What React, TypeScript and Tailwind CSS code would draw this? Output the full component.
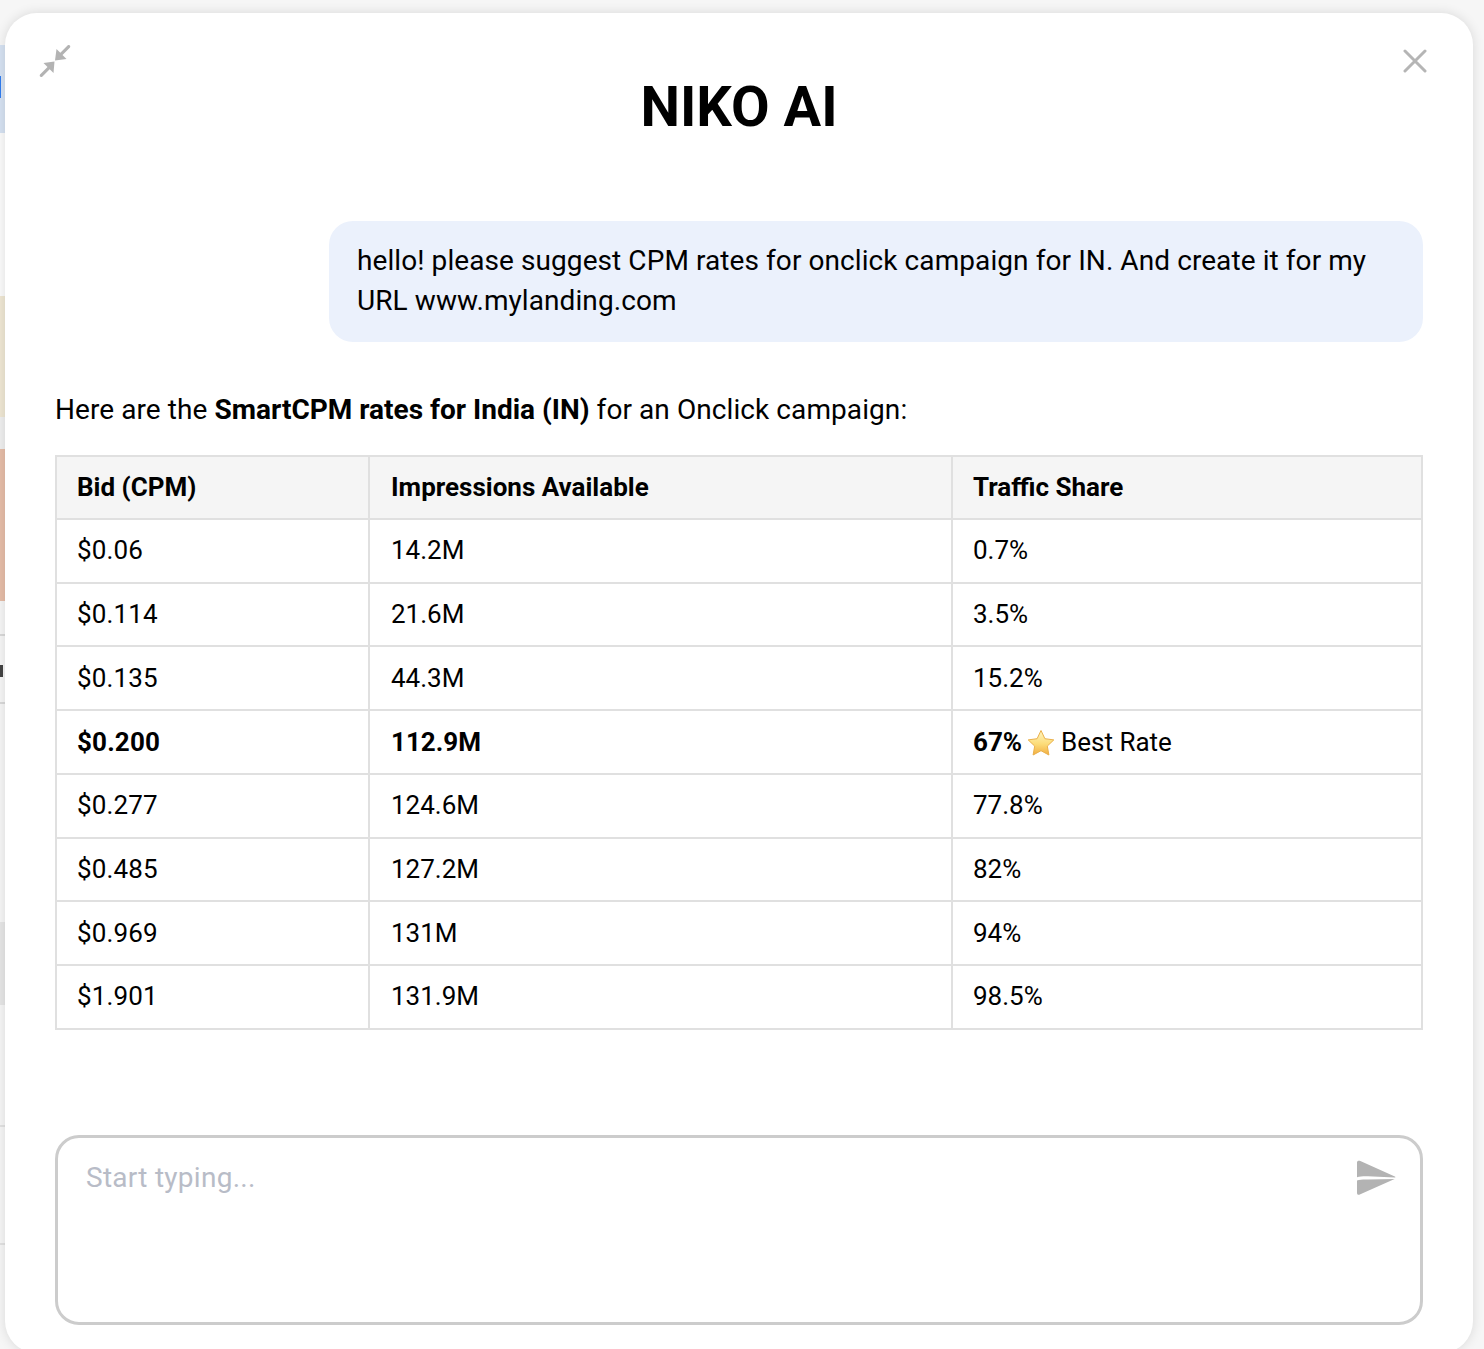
const rows = [
  { bid: "$0.06", imps: "14.2M", share: "0.7%" },
  { bid: "$0.114", imps: "21.6M", share: "3.5%" },
  { bid: "$0.135", imps: "44.3M", share: "15.2%" },
  { bid: "$0.200", imps: "112.9M", share: "67%", best: true },
  { bid: "$0.277", imps: "124.6M", share: "77.8%" },
  { bid: "$0.485", imps: "127.2M", share: "82%" },
  { bid: "$0.969", imps: "131M", share: "94%" },
  { bid: "$1.901", imps: "131.9M", share: "98.5%" },
];

function Star() {
  return (
    <svg viewBox="0 0 28 27" className="inline-block w-[28px] h-[27px] -my-[6px] ml-[5px] mr-[6px] align-[1px]">
      <defs>
        <linearGradient id="star" x1="0" y1="0" x2="0" y2="1">
          <stop offset="0" stopColor="#fff6c4" />
          <stop offset="0.55" stopColor="#fcdc78" />
          <stop offset="1" stopColor="#f2ae42" />
        </linearGradient>
      </defs>
      <path
        d="M14 1.5l3.9 8.2 8.9 1.2-6.5 6.2 1.6 8.9L14 21.7 6.100 26l1.600-8.900-6.500-6.200 8.900-1.200z"
        fill="url(#star)"
        stroke="#eab04a"
        strokeWidth="1"
        strokeLinejoin="round"
      />
    </svg>
  );
}

export default function App() {
  return (
    <div className="flex h-screen overflow-hidden bg-[#f6f6f6] font-['Roboto',sans-serif] text-black">
      {/* what shows of the page behind the modal */}
      <div className="w-[5px] shrink-0 flex flex-col">
        <div className="h-[45px]" />
        <div className="h-[88px] bg-[#d6e2f2] pt-[31px]">
          <div className="h-[22px] w-[1px] bg-[#2f7cf0]" />
        </div>
        <div className="h-[163px] bg-[#fbfbfb]" />
        <div className="h-[121px] bg-[#efe7d3]" />
        <div className="h-[32px] bg-[#efefef]" />
        <div className="h-[152px] bg-[#e6bda8]" />
        <div className="h-[33px]" />
        <div className="h-[70px] border-y-2 border-[#d9d9d9] pt-[29px]">
          <div className="h-[12px] w-[3px] bg-[#444444]" />
        </div>
        <div className="h-[218px]" />
        <div className="h-[83px] bg-[#e6e6e6]" />
        <div className="h-[120px]" />
        <div className="h-[120px] border-y-2 border-[#e2e2e2]" />
      </div>

      <div className="relative mt-[13px] w-[1468px] h-[1340px] shrink-0 rounded-[32px] bg-white shadow-[0_0_12px_rgba(0,0,0,0.12)] px-[50px]">
        <button className="absolute left-[33px] top-[31px] text-[#b3b3b3]">
          <svg viewBox="0 0 34 34" className="w-[34px] h-[34px]" fill="currentColor">
            <path d="M32 3.500 24.500 11l4 4L17 16.500 18.500 5l3.800 3.800L29.800 1.300c1.500-1 3.200.7 2.200 2.200z" />
            <path d="M2 30.500 9.500 23l-4-4L16.500 17.500 15.500 29l-3.800-3.800L4.200 32.700c-1.500 1-3.200-.7-2.200-2.200z" />
          </svg>
        </button>
        <button className="absolute left-[1398px] top-[36px] text-[#b5b5b5]">
          <svg viewBox="0 0 24 24" className="w-[24px] h-[24px]" fill="none" stroke="currentColor" strokeWidth="3" strokeLinecap="round">
            <path d="M2 2l20 20M22 2L2 22" />
          </svg>
        </button>

        <h1 className="pt-[59px] text-center text-[56px] leading-[70px] font-bold">NIKO AI</h1>

        <div className="mt-[79px] ml-[274px] rounded-[24px] bg-[#ebf1fc] pl-[28px] pr-[27px] pt-[20px] pb-[21px] text-[28px] leading-[40px] tracking-[0.08px]">
          hello! please suggest CPM rates for onclick campaign for IN. And create it for my URL www.mylanding.com
        </div>

        <p className="mt-[48px] text-[28px] leading-[40px] tracking-[0.08px]">
          Here are the <strong className="font-bold tracking-[0px]">SmartCPM rates for India (IN)</strong> for an Onclick campaign:
        </p>

        <table className="mt-[25px] w-[1368px] table-fixed border-collapse text-[26px]">
          <thead>
            <tr className="h-[63px] bg-[#f5f5f5] text-left font-bold">
              <th className="w-[313px] border-2 border-[#e0e0e0] pl-[20px]">Bid (CPM)</th>
              <th className="w-[583px] border-2 border-[#e0e0e0] pl-[21px]">Impressions Available</th>
              <th className="border-2 border-[#e0e0e0] pl-[20px]">Traffic Share</th>
            </tr>
          </thead>
          <tbody>
            {rows.map((r) => (
              <tr key={r.bid} className="h-[63.72px]">
                <td className={`border-2 border-[#e0e0e0] pl-[20px] tracking-[0.15px] ${r.best ? "font-bold" : ""}`}>{r.bid}</td>
                <td className={`border-2 border-[#e0e0e0] pl-[21px] ${r.best ? "font-bold" : ""}`}>{r.imps}</td>
                <td className="border-2 border-[#e0e0e0] pl-[20px]">
                  {r.best ? (
                    <>
                      <strong className="font-bold">{r.share}</strong>
                      <Star />
                      Best Rate
                    </>
                  ) : (
                    r.share
                  )}
                </td>
              </tr>
            ))}
          </tbody>
        </table>

        <div className="relative mt-[105px]">
          <textarea
            placeholder="Start typing..."
            className="block w-full h-[190px] resize-none rounded-[24px] border-[3px] border-[#cccccc] px-[28px] py-[20px] text-[28px] leading-[40px] outline-none placeholder:text-[#b8bcc7] placeholder:tracking-[0.27px]"
          />
          <button className="absolute right-[27px] top-[25px] text-[#b3b3b3]">
            <svg viewBox="0 0 40 36" className="w-[40px] h-[36px]" fill="currentColor">
              <path d="M1 2.500C1 .9 2.400.3 3.800.8L38.800 16.600c.8.4.8 1-.2 1L12 16.200c-4-.2-8 .1-11 1z" />
              <path d="M1 20.500c3-1 7-1.200 11-1l26.600-.5L3.800 34.600C2.400 35.100 1 34.500 1 32.900z" />
            </svg>
          </button>
        </div>
      </div>
    </div>
  );
}
